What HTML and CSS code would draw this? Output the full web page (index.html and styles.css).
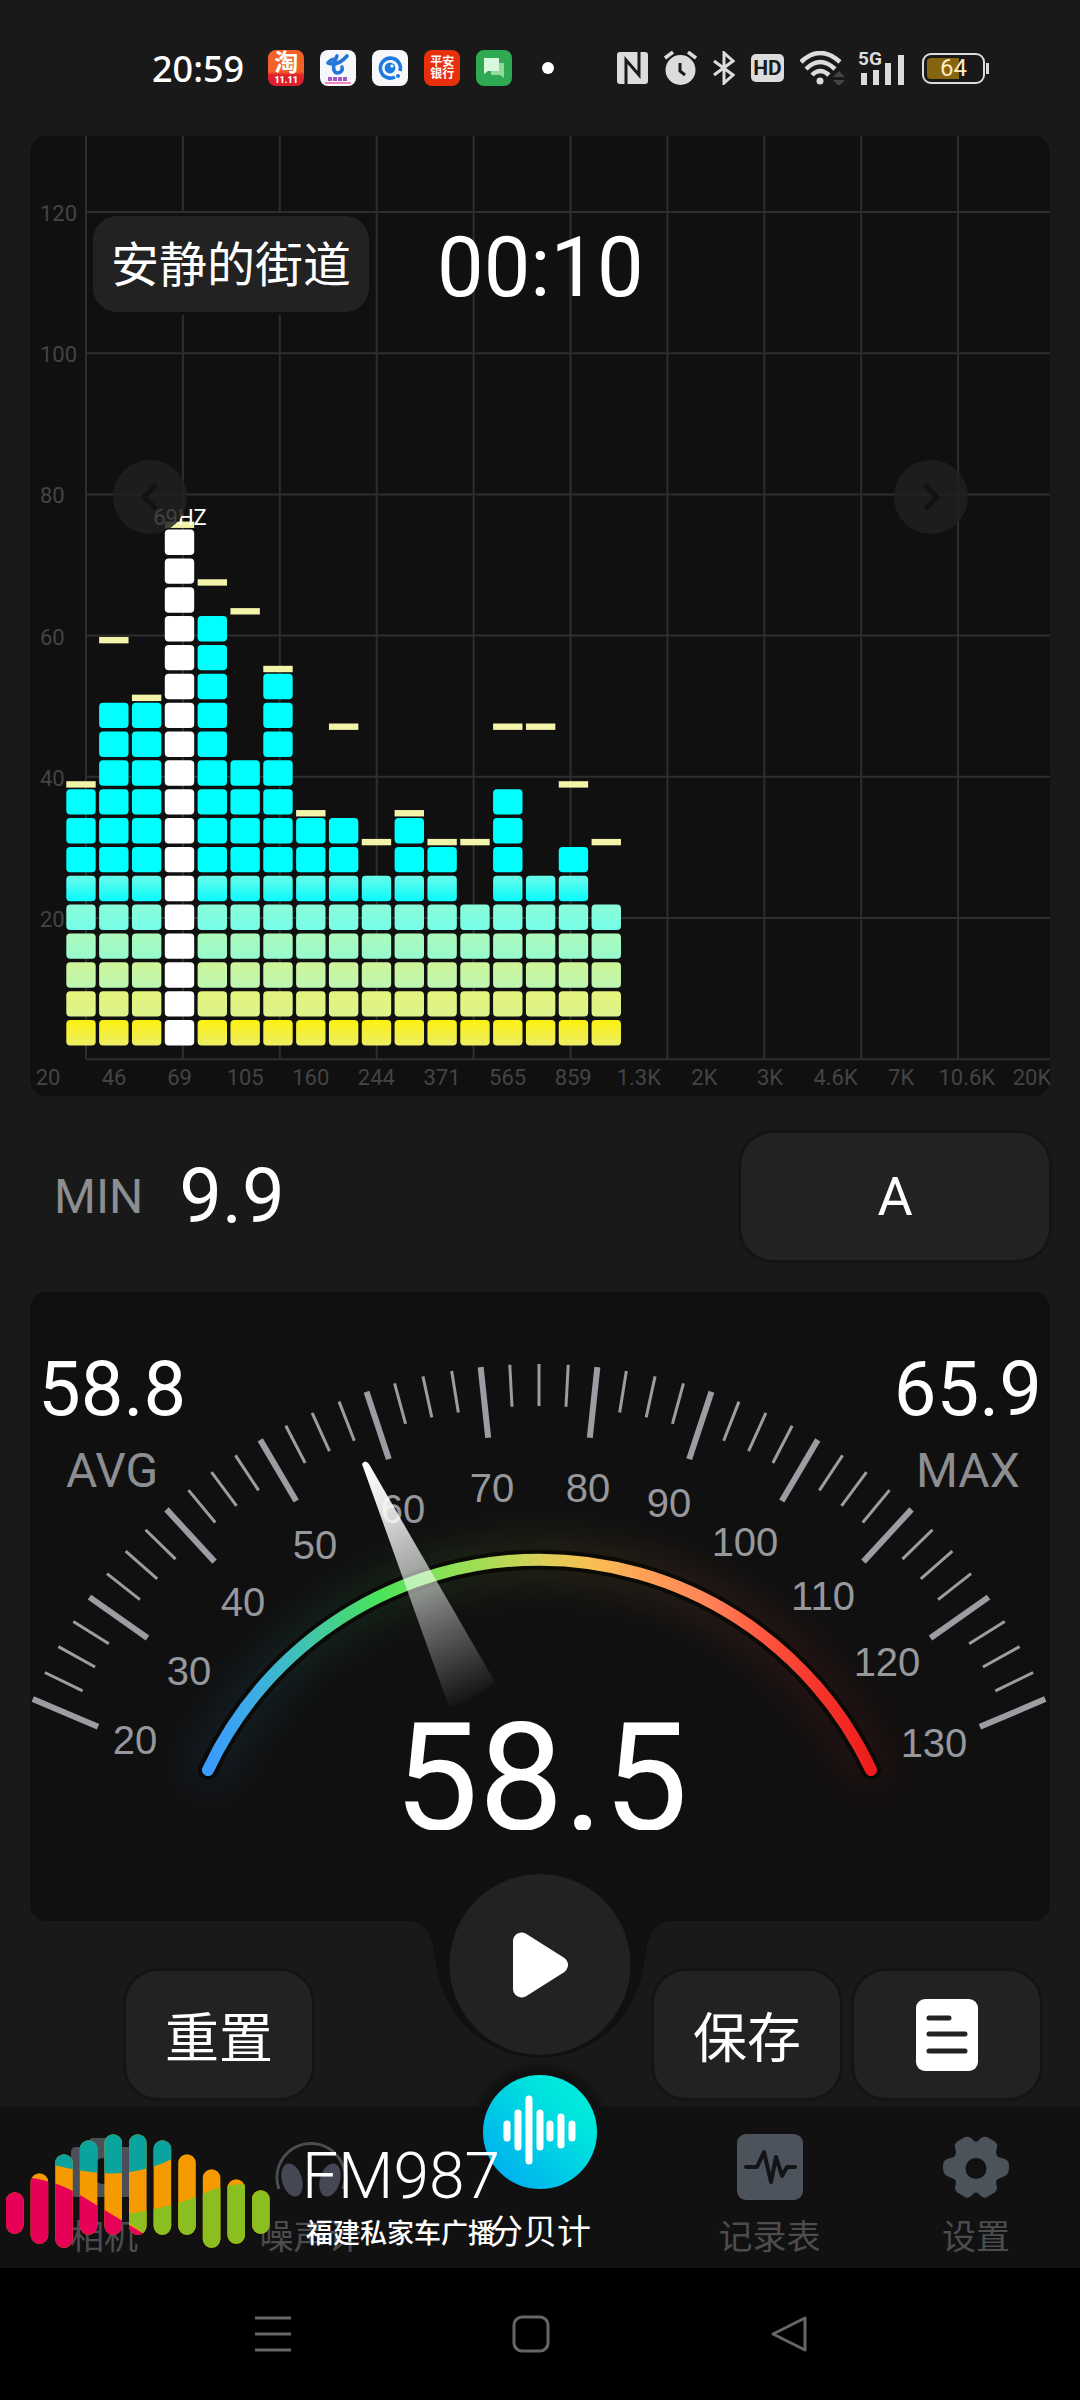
FILE: index.html
```html
<!DOCTYPE html>
<html lang="zh-CN">
<head>
    <meta charset="UTF-8">
    <meta name="viewport" content="width=device-width, initial-scale=1">
    <title>分贝计</title>
    <link rel="stylesheet" href="styles.css">
</head>
<body>
    <header class="status-bar">
        <div class="status-left">
            <span class="clock">20:59</span>
            <span class="app-icon app-tao"><b>淘</b><small>11.11</small></span>
            <span class="app-icon app-white">
                <svg viewBox="0 0 36 36"><path d="M8 13c6 2 13 0 19-7M8 13c2-3 5-4 8-4M17 6c-4 7-5 16 0 17 4 0 6-3 5-6" fill="none" stroke="#2377d6" stroke-width="3.6" stroke-linecap="round"/><path d="M8 29h19" stroke="#a457c9" stroke-width="4" stroke-dasharray="4 1"/><path d="M5 33h26" stroke="#f08ac0" stroke-width="2"/></svg>
            </span>
            <span class="app-icon app-white">
                <svg viewBox="0 0 36 36"><path d="M23 27A10 10 0 1 1 28 21" fill="none" stroke="#1f7be0" stroke-width="3.6"/><circle cx="18" cy="18" r="5.4" fill="#1f7be0"/><circle cx="20" cy="16" r="1.600" fill="#fff"/><circle cx="26" cy="26" r="2" fill="#1f7be0"/></svg>
            </span>
            <span class="app-icon app-bank">平安<br>银行</span>
            <span class="app-icon app-chat">
                <svg viewBox="0 0 36 36"><path d="M15 13h13v15l-4-3h-9z" fill="#8fdc9e"/><path d="M8 8h15v13H12l-4 3z" fill="#d8f7dc"/></svg>
            </span>
            <span class="dot"></span>
        </div>
        <div class="status-right">
            <svg width="31" height="32" viewBox="0 0 31 32"><rect width="31" height="32" rx="3" fill="#dcdcdc"/><path d="M9 32V8l13 15V0" fill="none" stroke="#191919" stroke-width="3"/></svg>
            <svg width="33" height="34" viewBox="0 0 33 34"><circle cx="16.500" cy="19" r="15" fill="#dcdcdc"/><path d="M1 7l8-6M32 7l-8-6" stroke="#dcdcdc" stroke-width="3.500"/><path d="M16 12v8l5 4" fill="none" stroke="#191919" stroke-width="3"/></svg>
            <svg width="22" height="34" viewBox="0 0 22 34"><path d="M1 10l19 14-9 8V2l9 8L1 24" fill="none" stroke="#dcdcdc" stroke-width="3"/></svg>
            <span class="hd">HD</span>
            <svg width="46" height="34" viewBox="0 0 46 34"><g fill="none" stroke="#dcdcdc" stroke-width="4.500"><path d="M1 11Q20-7 40 11"/><path d="M6 18Q20 4 35 18"/><path d="M12 24Q20 16 29 24"/></g><circle cx="20" cy="30" r="3.500" fill="#dcdcdc"/><path d="M33 26l6-6 6 6zM33 29l6 6 6-6z" fill="#444"/></svg>
            <div class="signal">
                <span>5G</span>
                <svg width="48" height="33" viewBox="0 0 48 33"><path d="M3 21h6v12H3zM15 18h6v15h-6zM27 11h6v22h-6zM40 3h6v30h-6z" fill="#dcdcdc"/></svg>
            </div>
            <div class="battery"><span>64</span></div>
        </div>
    </header>

    <main>
        <section class="card spectrum">
            <svg id="spectrum" class="drawing" viewBox="0 0 1020 960"></svg>
            <div class="spectrum-top">
                <span class="level-name">安静的街道</span>
                <time class="timer">00:10</time>
            </div>
            <button class="arrow arrow-prev" type="button" aria-label="上一页"><svg viewBox="0 0 24 30"><path d="M18 3L6 15l12 12"/></svg></button>
            <button class="arrow arrow-next" type="button" aria-label="下一页"><svg viewBox="0 0 24 30"><path d="M6 3l12 12L6 27"/></svg></button>
        </section>

        <section class="min-row">
            <span class="caption">MIN</span>
            <span class="value">9.9</span>
            <button class="btn btn-weight" type="button">A</button>
        </section>

        <section class="card meter">
            <svg id="gauge" class="drawing" viewBox="0 0 1020 629"></svg>
            <div class="stats">
                <div class="stat"><span class="value">58.8</span><span class="caption">AVG</span></div>
                <div class="stat"><span class="value">65.9</span><span class="caption">MAX</span></div>
            </div>
        </section>

        <section class="controls">
            <svg class="notch" viewBox="0 0 270 150"><path d="M0 0Q22 2 27 22Q30 38 32 48A104 104 0 0 0 238 48Q240 38 243 22Q248 2 270 0z" fill="#101010"/></svg>
            <button class="play" type="button" aria-label="播放"><svg viewBox="0 0 56 66"><path d="M9 9v48l38-24z" fill="#fff" stroke="#fff" stroke-width="17" stroke-linejoin="round"/></svg></button>
            <button class="btn" type="button">重置</button>
            <button class="btn btn-save" type="button">保存</button>
            <button class="btn" type="button" aria-label="记录"><svg class="doc" viewBox="0 0 62 72"><rect width="62" height="72" rx="9" fill="#fff"/><path d="M13 19h20M13 35h36M13 52h36" stroke="#222" stroke-width="5" stroke-linecap="round"/></svg></button>
        </section>
    </main>

    <nav class="tabs">
        <a class="tab" href="#camera">
            <svg viewBox="0 0 66 66"><path d="M20 4h26l5 9h10q5 0 5 5v40q0 5-5 5H5q-5 0-5-5V18q0-5 5-5h10z" fill="#4b4f57"/><circle cx="33" cy="37" r="13" fill="#111"/></svg>
            相机
        </a>
        <a class="tab" href="#noise">
            <svg viewBox="0 0 66 66"><path d="M1 55A34 34 0 1 1 65 55" fill="none" stroke="#4b4d51" stroke-width="3"/><ellipse cx="14" cy="46" rx="10" ry="17" transform="rotate(-16 14 46)" fill="#434854"/><ellipse cx="52" cy="46" rx="10" ry="17" transform="rotate(16 52 46)" fill="#434854"/></svg>
            噪声计
        </a>
        <a class="tab tab-active" href="#meter">
            <span class="tab-circle"><svg viewBox="0 0 114 114"><path d="M24 49v14M35 38v34M46 24v62M57 38v34M67 49v14M78 42v28M89 49v14" stroke="#fff" stroke-width="7" stroke-linecap="round"/></svg></span>
            分贝计
        </a>
        <a class="tab" href="#history">
            <svg viewBox="0 0 66 66"><rect width="66" height="66" rx="9" fill="#4d535d"/><path d="M9 33h11l7-15 7 30 5-25 6 19 5-9h8" fill="none" stroke="#131417" stroke-width="4" stroke-linecap="round" stroke-linejoin="round"/></svg>
            记录表
        </a>
        <a class="tab" href="#settings">
            <svg viewBox="0 0 66 66"><path fill-rule="evenodd" d="M22 3q3-1 6 1l3 3q2 1 4 0l3-3q3-2 6-1l7 4q4 3 3 6l-1 5q0 3 2 5l7 2q4 1 4 8t-4 9l-7 3q-2 1-2 4l1 4q0 4-3 6l-7 4q-3 2-6-1l-3-3q-2-1-4 0l-3 3q-3 3-6 1l-7-4q-3-2-3-6l1-4q0-3-2-4l-7-3q-4-2-4-9t4-8l7-2q2-2 2-5l-1-5q-1-3 3-6zM33 24a10.500 10.500 0 1 0 0 21a10.500 10.500 0 1 0 0-21z" fill="#4d535b"/></svg>
            设置
        </a>
        <div class="radio-logo">
            <svg class="radio-bars" viewBox="0 0 275 120">
                <clipPath id="bars"><path id="barsPath"/></clipPath>
                <g clip-path="url(#bars)">
                    <rect width="275" height="120" fill="#f59b00"/>
                    <path d="M50 34Q99 47 130 42Q155 38 174 28V0H50z" fill="#0aa39d"/>
                    <path d="M0 45Q50 46 80 65L149 107V120H0z" fill="#e60057"/>
                    <path d="M125 84Q170 78 200 65Q225 53 248 54V40H275V120H149V107L125 90z" fill="#8bbf1f"/>
                </g>
            </svg>
            <div class="radio-text">
                <span class="radio-name">FM987</span>
                <span class="radio-sub">福建私家车广播</span>
            </div>
        </div>
    </nav>

    <footer class="system-nav">
        <button type="button" aria-label="菜单"><svg viewBox="0 0 38 38"><path d="M1 3h36M1 19h36M1 35h36"/></svg></button>
        <button type="button" aria-label="主页"><svg viewBox="0 0 38 38"><rect x="2" y="2" width="34" height="34" rx="8"/></svg></button>
        <button type="button" aria-label="返回"><svg viewBox="0 0 38 38"><path d="M35 3v32L3 19z" stroke-linejoin="round"/></svg></button>
    </footer>
    <script src="script.js"></script>
</body>
</html>
```

FILE: styles.css
```css
* {
    box-sizing: border-box;
}

body {
    margin: 0;
    background-color: #191919;
    color: #fff;
    font-family: Roboto, "Noto Sans CJK SC", sans-serif;
}

button {
    padding: 0;
    border: none;
    color: #fff;
    font-family: inherit;
    cursor: pointer;
}

button svg {
    display: block;
    margin: 0 auto;
}

/* Status bar */
.status-bar {
    display: flex;
    justify-content: space-between;
    align-items: center;
    height: 136px;
    padding: 0 91px 0 152px;
}

.status-left,
.status-right {
    display: flex;
    align-items: center;
    gap: 16px;
}

.clock {
    margin-right: 8px;
    font-family: "Noto Sans", sans-serif;
    font-size: 36px;
    font-weight: 500;
}

.app-icon {
    width: 36px;
    height: 36px;
    border-radius: 8px;
    overflow: hidden;
    text-align: center;
}

.app-icon svg {
    display: block;
}

.app-tao {
    display: flex;
    flex-direction: column;
    align-items: center;
    background: linear-gradient(#f0622a 60%, #e0202c 70%);
}

.app-tao b {
    font-size: 24px;
    line-height: 26px;
}

.app-tao small {
    font-size: 9px;
    font-weight: 900;
    line-height: 9px;
}

.app-white {
    background-color: #f6f8fc;
}

.app-bank {
    padding-top: 6px;
    background-color: #e8300c;
    font-size: 12px;
    font-weight: 700;
    line-height: 12px;
}

.app-chat {
    background-color: #2fa952;
}

.dot {
    width: 12px;
    height: 12px;
    margin-left: 14px;
    border-radius: 50%;
    background-color: #fff;
}

.hd {
    width: 33px;
    height: 28px;
    border-radius: 5px;
    background-color: #dcdcdc;
    color: #191919;
    font-size: 21px;
    font-weight: 700;
    line-height: 28px;
    text-align: center;
}

.signal {
    position: relative;
    display: flex;
    margin-left: -4px;
}

.signal span {
    position: absolute;
    top: -3px;
    left: 0;
    color: #dcdcdc;
    font-size: 19px;
    font-weight: 700;
    line-height: 20px;
}

.battery {
    position: relative;
    width: 63px;
    height: 31px;
    margin-right: 4px;
    padding: 3px;
    border: 2px solid #dcdcdc;
    border-radius: 9px;
    background: linear-gradient(90deg, #86650f 60%, transparent 60%) content-box;
    color: #ffe9c0;
    font-size: 24px;
    line-height: 21px;
    text-align: center;
}

.battery::after {
    content: "";
    position: absolute;
    top: 8px;
    right: -6px;
    width: 3px;
    height: 11px;
    background-color: #dcdcdc;
}

/* Panels */
.card {
    margin: 0 30px;
    border-radius: 16px;
    background-color: #101010;
}

.drawing {
    display: block;
    width: 100%;
}

.spectrum {
    position: relative;
}

.spectrum-top {
    position: absolute;
    top: 80px;
    left: 63px;
    display: flex;
    align-items: flex-start;
    gap: 68px;
}

.level-name {
    padding: 4px 18px 0;
    border-radius: 24px;
    background-color: #222;
    box-shadow: 0 0 0 3px #101010;
    font-size: 48px;
    line-height: 92px;
}

.timer {
    font-size: 83px;
    line-height: 104px;
}

.arrow {
    position: absolute;
    top: 324px;
    width: 74px;
    height: 74px;
    border-radius: 50%;
    background-color: rgba(32, 32, 32, 0.85);
}

.arrow svg {
    width: 24px;
    height: 30px;
    fill: none;
    stroke: #121212;
    stroke-width: 5px;
}

.arrow-prev {
    left: 83px;
}

.arrow-next {
    right: 82px;
}

.caption {
    color: #8c8e92;
    font-size: 48px;
}

.value {
    font-size: 76px;
}

.btn {
    width: 186px;
    height: 127px;
    border-radius: 32px;
    background-color: #222;
    box-shadow: 0 0 0 3px #141414;
    font-size: 54px;
}

.min-row {
    display: flex;
    align-items: center;
    gap: 36px;
    height: 196px;
    padding: 4px 31px 0 54px;
}

.btn-weight {
    width: 308px;
    margin-left: auto;
}

/* Dial with the average and maximum in its upper corners */
.meter {
    display: grid;
}

.meter > * {
    grid-area: 1 / 1;
}

.stats {
    display: flex;
    justify-content: space-between;
    padding: 55px 8px 0;
}

.stat {
    display: flex;
    flex-direction: column;
    align-items: center;
}

.stat .value {
    line-height: 84px;
}

.stat .caption {
    line-height: 80px;
}

/* Buttons */
.controls {
    position: relative;
    display: flex;
    gap: 14px;
    padding: 50px 40px 9px 126px;
}

.btn-save {
    margin-left: auto;
}

.notch {
    position: absolute;
    top: -1px;
    left: 50%;
    width: 270px;
    transform: translateX(-50%);
}

.play {
    position: absolute;
    top: -47px;
    left: 50%;
    width: 181px;
    height: 181px;
    border-radius: 50%;
    background-color: #222;
    transform: translateX(-50%);
}

.play svg {
    width: 56px;
    height: 66px;
}

.doc {
    width: 62px;
    height: 72px;
}

/* Bottom tabs */
.tabs {
    position: relative;
    display: flex;
    justify-content: space-between;
    align-items: flex-end;
    height: 161px;
    padding: 0 70px 14px;
    background-color: #111;
}

.tab {
    display: flex;
    flex-direction: column;
    align-items: center;
    gap: 20px;
    color: #4c4c4f;
    font-size: 34px;
    line-height: 34px;
    text-decoration: none;
}

.tab > svg {
    width: 66px;
    height: 66px;
    overflow: visible;
}

.tab-active {
    gap: 26px;
    padding-bottom: 5px;
    color: #fff;
}

.tab-circle {
    width: 114px;
    height: 114px;
    border-radius: 50%;
    background: linear-gradient(45deg, #00aef0 10%, #00e8dc 75%);
    box-shadow: 0 0 6px 10px #111;
}

/* Radio station mark on top of the tabs */
.radio-logo {
    position: absolute;
    top: 23px;
    left: 0;
    display: flex;
    pointer-events: none;
}

.radio-bars {
    width: 275px;
    height: 120px;
}

.radio-text {
    display: flex;
    flex-direction: column;
    gap: 8px;
    padding: 14px 0 0 27px;
}

.radio-name {
    font-family: "Liberation Sans Narrow", Roboto, sans-serif;
    font-size: 64px;
    font-weight: 300;
    line-height: 66px;
}

.radio-sub {
    padding-left: 4px;
    font-size: 27px;
    font-weight: 500;
    line-height: 32px;
}

.system-nav {
    display: flex;
    justify-content: center;
    align-items: center;
    gap: 220px;
    height: 132px;
    padding-right: 18px;
    background-color: #000;
}

.system-nav button {
    background: none;
}

.system-nav svg {
    width: 38px;
    height: 38px;
    fill: none;
    stroke: #666;
    stroke-width: 3px;
}

/* Text and lines inside the drawings */
.grid-line {
    stroke: #2e2e2e;
    stroke-width: 2px;
}

.axis-text {
    fill: #444;
    font-size: 22px;
}

.peak-text {
    fill: #fff;
    font-size: 22px;
}

.tick {
    stroke: #9b9da2;
    stroke-width: 3px;
}

.tick-major {
    stroke-width: 6px;
}

.dial-text {
    fill: #96989d;
    font-family: "Liberation Sans", Arial, sans-serif;
    font-size: 40px;
}

.reading {
    fill: #fff;
    font-size: 151px;
}
```

FILE: script.js
```js
// Spectrum: number of blocks and peak position for each frequency band
const levels = [9, 12, 12, 18, 15, 10, 13, 8, 8, 6, 8, 7, 5, 9, 6, 7, 5];
const peaks = [9, 14, 12, 18, 16, 15, 13, 8, 11, 7, 8, 7, 7, 11, 11, 9, 7];
const strongest = 3;
const freqLabels = ["20", "46", "69", "105", "160", "244", "371", "565", "859", "1.3K", "2K", "3K", "4.6K", "7K", "10.6K", "20K"];
const rowColors = [
    ["#fdf10f", "#ecee66"],
    ["#e5f47a", "#dbf38e"],
    ["#cff598", "#bcf7b2"],
    ["#aef9ba", "#96fbce"],
    ["#8cfcd8", "#76fde8"],
    ["#6cfbea", "#08fbfd"]
];

function drawSpectrum() {
    let out = "<defs>";
    rowColors.forEach((c, i) => {
        out += `<linearGradient id="row${i}" x2="0" y2="1"><stop stop-color="${c[0]}"/><stop offset="1" stop-color="${c[1]}"/></linearGradient>`;
    });
    out += "</defs>";

    for (let i = 0; i < 10; i++) {
        const x = 56 + i * 96.9;
        out += `<line class="grid-line" x1="${x}" y1="0" x2="${x}" y2="923"/>`;
    }
    for (let i = 0; i < 7; i++) {
        const y = 76 + i * 141.2;
        out += `<line class="grid-line" x1="56" y1="${y}" x2="1020" y2="${y}"/>`;
        if (i < 6) {
            out += `<text class="axis-text" x="10" y="${y + 9}">${120 - i * 20}</text>`;
        }
    }
    freqLabels.forEach((label, i) => {
        const x = i === 0 ? 18 : i === 15 ? 1002 : 84 + (i - 1) * 65.6;
        out += `<text class="axis-text" x="${x}" y="949" text-anchor="middle">${label}</text>`;
    });

    levels.forEach((count, col) => {
        const x = 36.3 + col * 32.83;
        for (let row = 0; row < count; row++) {
            let fill = row < 6 ? `url(#row${row})` : "#00ffff";
            if (col === strongest) fill = "#fff";
            out += `<rect x="${x}" y="${884 - row * 28.85}" width="29.4" height="25.4" rx="4" fill="${fill}"/>`;
        }
        out += `<rect x="${x}" y="${876 - (peaks[col] - 1) * 28.85}" width="29.4" height="6.4" fill="#f3f3aa"/>`;
    });
    out += `<text class="peak-text" x="150" y="389" text-anchor="middle">69HZ</text>`;
    document.getElementById("spectrum").innerHTML = out;
}

// Dial numbers: value, center x, baseline y
const dialLabels = [
    [20, 105, 462], [30, 159, 393], [40, 213, 324], [50, 285, 267],
    [60, 373, 231], [70, 462, 210], [80, 558, 210], [90, 639, 225],
    [100, 715, 264], [110, 793, 318], [120, 857, 384], [130, 904, 465]
];
const arcStops = [
    [0, "#3a9bff"], [7, "#3badE4"], [13, "#3fbfbd"], [19, "#45d08c"], [26, "#49e45a"],
    [34, "#82e158"], [41, "#a2dd54"], [50, "#d8d058"], [58, "#f8bf52"], [66, "#ffa057"],
    [76, "#ff8158"], [84, "#ff553e"], [92, "#f5352b"], [100, "#ee1c1c"]
];

function drawGauge() {
    let out = `<defs><linearGradient id="arcColor" gradientUnits="userSpaceOnUse" x1="178" y1="0" x2="841" y2="0">`;
    arcStops.forEach(s => {
        out += `<stop offset="${s[0]}%" stop-color="${s[1]}"/>`;
    });
    out += `</linearGradient>
        <linearGradient id="needleColor" gradientUnits="userSpaceOnUse" x1="335" y1="170" x2="440" y2="412">
            <stop stop-color="#fff"/><stop offset="0.15" stop-color="#fff" stop-opacity="0.92"/>
            <stop offset="0.5" stop-color="#fff" stop-opacity="0.55"/><stop offset="1" stop-color="#fff" stop-opacity="0"/>
        </linearGradient>
        <filter id="glow" filterUnits="userSpaceOnUse" x="100" y="180" width="820" height="400"><feGaussianBlur stdDeviation="22"/></filter>
        <clipPath id="readingClip"><rect x="300" y="400" width="420" height="138"/></clipPath></defs>`;

    // 11 intervals over 134 degrees, three thin ticks inside each one
    for (let i = 0; i <= 44; i++) {
        const major = i % 4 === 0;
        const a = (-67 + i * 134 / 44) * Math.PI / 180;
        const inner = major ? 479 : 508;
        out += `<line class="tick${major ? " tick-major" : ""}" x1="${509 + inner * Math.sin(a)}" y1="${622 - inner * Math.cos(a)}" x2="${509 + 550 * Math.sin(a)}" y2="${622 - 550 * Math.cos(a)}"/>`;
    }
    dialLabels.forEach(d => {
        out += `<text class="dial-text" x="${d[1]}" y="${d[2]}" text-anchor="middle">${d[0]}</text>`;
    });

    const arc = "M178 478A366.4 366.4 0 0 1 841 478";
    out += `<g fill="none" stroke-linecap="round">
        <path d="${arc}" stroke="url(#arcColor)" stroke-width="34" opacity="0.13" filter="url(#glow)"/>
        <path d="${arc}" stroke="#0a0a06" stroke-width="20"/>
        <path d="${arc}" stroke="url(#arcColor)" stroke-width="12"/></g>
        <path d="M332 172Q335 167 339 172L465 390Q446 408 419 415z" fill="url(#needleColor)"/>
        <text class="reading" x="511" y="538" text-anchor="middle" clip-path="url(#readingClip)">58.5</text>`;
    document.getElementById("gauge").innerHTML = out;
}

// Top and bottom of each bar in the radio mark
const radioBars = [[62, 104], [43, 114], [24, 118], [10, 105], [4, 105], [4, 105], [10, 105], [24, 105], [39, 118], [49, 114], [60, 104]];

function drawRadioBars() {
    let d = "";
    radioBars.forEach((b, i) => {
        const x = 6 + i * 24.6;
        d += `M${x} ${b[0] + 9}a8.8 8.8 0 0 1 17.6 0V${b[1] - 9}a8.8 8.8 0 0 1 -17.6 0z`;
    });
    document.getElementById("barsPath").setAttribute("d", d);
}

drawSpectrum();
drawGauge();
drawRadioBars();
```
